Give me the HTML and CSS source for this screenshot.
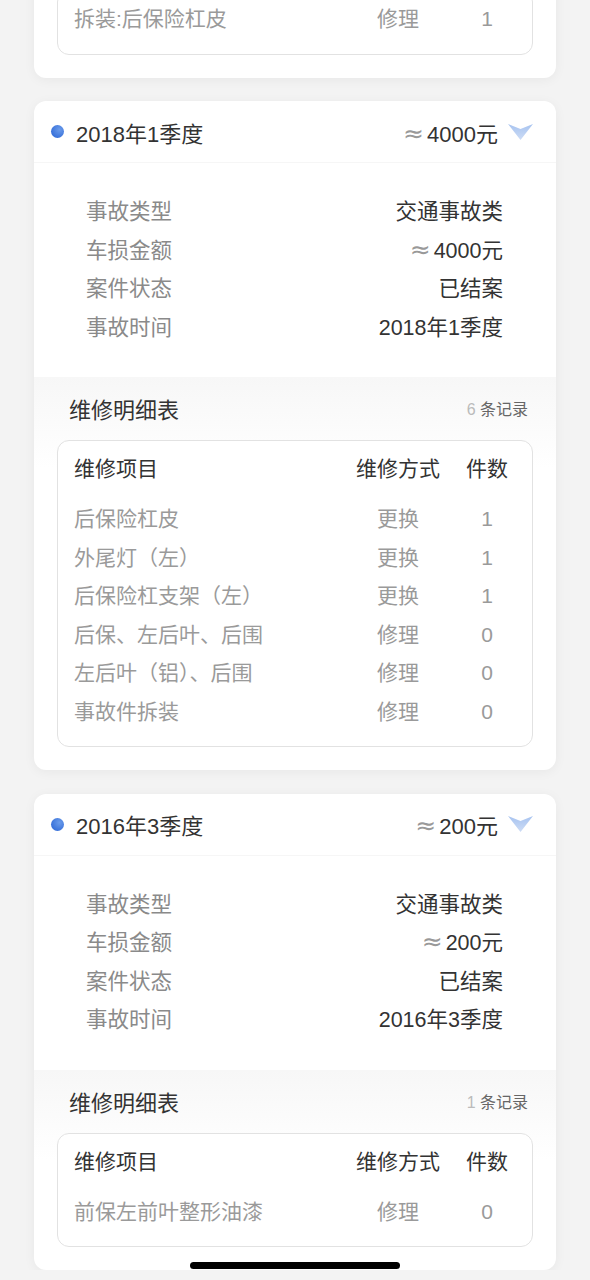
FILE: index.html
```html
<!DOCTYPE html>
<html lang="zh-CN">
<head>
  <meta charset="UTF-8" />
  <meta name="viewport" content="width=device-width, initial-scale=1.0"/>
  <title>出险记录</title>
  <link rel="stylesheet" href="styles.css">
</head>
<body>
  <div class="list">

    <!-- previous record, scrolled mostly out of view -->
    <div class="card card-tail">
      <div class="detail">
        <div class="repair-box">
          <div class="repair-row">
            <span>拆装:后保险杠皮</span><span>修理</span><span>1</span>
          </div>
        </div>
      </div>
    </div>

    <div class="card">
      <div class="card-head">
        <span class="dot"></span>
        <span class="period">2018年1季度</span>
        <span class="amount"><i>≈</i>4000元</span>
        <svg class="arrow" width="25" height="16" viewBox="0 0 25 16">
          <defs>
            <linearGradient id="ag1" x1="0" y1="0" x2="0" y2="1">
              <stop offset="0" stop-color="#a7c3f0"/>
              <stop offset="1" stop-color="#cddcf5"/>
            </linearGradient>
          </defs>
          <polygon points="0,0 12.5,5 25,0 12.5,16" fill="url(#ag1)"/>
        </svg>
      </div>
      <div class="info">
        <div class="info-row"><span class="label">事故类型</span><span class="value">交通事故类</span></div>
        <div class="info-row"><span class="label">车损金额</span><span class="value"><i>≈</i>4000元</span></div>
        <div class="info-row"><span class="label">案件状态</span><span class="value">已结案</span></div>
        <div class="info-row"><span class="label">事故时间</span><span class="value">2018年1季度</span></div>
      </div>
      <div class="detail">
        <div class="detail-title">
          <span>维修明细表</span>
          <span class="count"><em>6</em> 条记录</span>
        </div>
        <div class="repair-box">
          <div class="repair-row repair-head">
            <span>维修项目</span><span>维修方式</span><span>件数</span>
          </div>
          <div class="repair-row"><span>后保险杠皮</span><span>更换</span><span>1</span></div>
          <div class="repair-row"><span>外尾灯（左）</span><span>更换</span><span>1</span></div>
          <div class="repair-row"><span>后保险杠支架（左）</span><span>更换</span><span>1</span></div>
          <div class="repair-row"><span>后保、左后叶、后围</span><span>修理</span><span>0</span></div>
          <div class="repair-row"><span>左后叶（铝）、后围</span><span>修理</span><span>0</span></div>
          <div class="repair-row"><span>事故件拆装</span><span>修理</span><span>0</span></div>
        </div>
      </div>
    </div>

    <div class="card">
      <div class="card-head">
        <span class="dot"></span>
        <span class="period">2016年3季度</span>
        <span class="amount"><i>≈</i>200元</span>
        <svg class="arrow" width="25" height="16" viewBox="0 0 25 16">
          <defs>
            <linearGradient id="ag2" x1="0" y1="0" x2="0" y2="1">
              <stop offset="0" stop-color="#a7c3f0"/>
              <stop offset="1" stop-color="#cddcf5"/>
            </linearGradient>
          </defs>
          <polygon points="0,0 12.5,5 25,0 12.5,16" fill="url(#ag2)"/>
        </svg>
      </div>
      <div class="info">
        <div class="info-row"><span class="label">事故类型</span><span class="value">交通事故类</span></div>
        <div class="info-row"><span class="label">车损金额</span><span class="value"><i>≈</i>200元</span></div>
        <div class="info-row"><span class="label">案件状态</span><span class="value">已结案</span></div>
        <div class="info-row"><span class="label">事故时间</span><span class="value">2016年3季度</span></div>
      </div>
      <div class="detail">
        <div class="detail-title">
          <span>维修明细表</span>
          <span class="count"><em>1</em> 条记录</span>
        </div>
        <div class="repair-box">
          <div class="repair-row repair-head">
            <span>维修项目</span><span>维修方式</span><span>件数</span>
          </div>
          <div class="repair-row"><span>前保左前叶整形油漆</span><span>修理</span><span>0</span></div>
        </div>
      </div>
    </div>

  </div>

  <div class="home-bar"></div>
</body>
</html>
```

FILE: styles.css
```css
* {
  box-sizing: border-box;
  margin: 0;
  padding: 0;
}

body {
  font-family: 'Liberation Sans', 'Noto Sans CJK SC', sans-serif;
  background-color: #f3f3f3;
  color: #333;
}

/* page is scrolled: first card only shows its bottom */
.list {
  margin-top: -26px;
  padding: 0 34px;
  display: flex;
  flex-direction: column;
  gap: 23.5px;
}

.card {
  background-color: #fff;
  border-radius: 12px;
  box-shadow: 0 2px 12px rgba(0, 0, 0, 0.05);
  overflow: hidden;
  padding-bottom: 23px;
}

.card-tail .detail {
  background: #fff;
}

.card-head {
  height: 62px;
  display: flex;
  align-items: center;
  padding: 0 23px 0 17px;
  border-bottom: 1px solid #f6f6f6;
}

.dot {
  width: 13px;
  height: 13px;
  border-radius: 50%;
  background: radial-gradient(circle at 65% 35%, #6a9bea, #2561d4);
  margin-right: 12px;
}

.period {
  font-size: 22px;
  flex: 1;
}

.amount {
  font-size: 22px;
  margin-right: 10px;
}

.amount i, .value i {
  font-family: 'DejaVu Sans', sans-serif;
  font-style: normal;
  color: #999;
  font-size: 25px;
  line-height: 1;
  margin-right: 3px;
}

.arrow {
  display: block;
}

.info {
  padding: 30px 53px 30px 52px;
}

.info-row {
  display: flex;
  justify-content: space-between;
  line-height: 38.5px;
  font-size: 21.5px;
}

.label {
  color: #8a8a8a;
}

.value {
  color: #333;
}

.detail {
  background: linear-gradient(#f7f7f7, #fff 90px);
  padding: 16px 23px 0 23px;
}

.detail-title {
  display: flex;
  justify-content: space-between;
  align-items: center;
  height: 30px;
  padding: 0 5px 0 12px;
  font-size: 22px;
  margin-bottom: 17px;
}

.count {
  font-size: 16px;
  color: #666;
}

.count em {
  font-style: normal;
  color: #bbb;
}

.repair-box {
  background-color: #fff;
  border: 1px solid #e2e2e2;
  border-radius: 12px;
  padding: 9px 20px 15px 16px;
}

.repair-row {
  display: grid;
  grid-template-columns: 1fr 128px 50px;
  line-height: 38.5px;
  font-size: 21px;
  color: #9a9a9a;
}

.repair-row span:nth-child(2),
.repair-row span:nth-child(3) {
  text-align: center;
}

.repair-head {
  color: #333;
  margin-bottom: 11.5px;
}

.home-bar {
  position: fixed;
  left: 50%;
  bottom: 11px;
  width: 210px;
  height: 7px;
  margin-left: -105px;
  border-radius: 4px;
  background-color: #000;
}
```
